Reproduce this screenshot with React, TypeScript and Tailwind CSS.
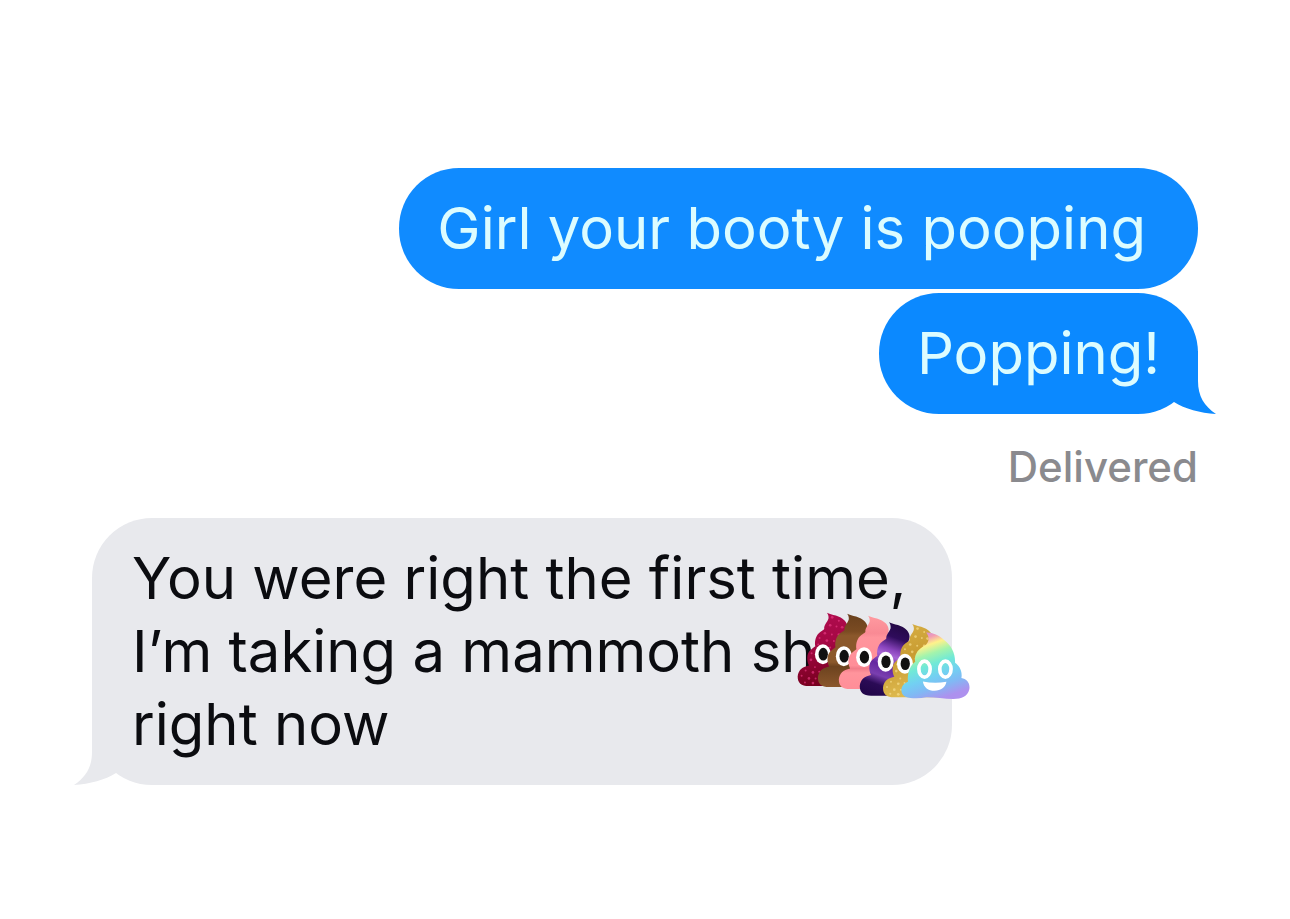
import { ReactNode } from "react";
import clsx from "clsx";

const PILE =
  "M88 0 C102 7 128 8 142 24 C152 36 152 48 146 58 C162 68 170 86 162 104 C178 112 186 130 180 152 C200 156 212 172 207 194 C202 214 185 220 165 221 L34 221 C10 221 0 211 0 192 C2 174 12 164 34 159 C27 146 26 124 38 113 C42 109 48 105 53 101 C50 84 56 66 68 58 C73 55 76 53 80 49 C78 35 94 26 93 14 C93 8 91 4 88 0Z";

const piles = [
  { x: 4, y: 2, fill: "url(#ruby)", eyeX: 76, eyeY: 125, glitter: "#f0408a" },
  { x: 65, y: 5, fill: "url(#brown)", eyeX: 78, eyeY: 128 },
  { x: 128, y: 11, fill: "url(#pink)", eyeX: 76, eyeY: 125 },
  { x: 191, y: 31, fill: "url(#galaxy)", eyeX: 78, eyeY: 119 },
  { x: 261, y: 36, fill: "url(#gold)", eyeX: 66, eyeY: 120, glitter: "#fbe596" },
];

// [x, y, radius] inside a pile
const flecks = [
  [104, 14, 4], [124, 24, 3], [98, 38, 4], [117, 42, 3], [134, 44, 4],
  [82, 62, 4], [103, 66, 3], [124, 66, 4], [66, 76, 3], [88, 84, 4],
  [109, 85, 3], [62, 96, 3], [76, 103, 4], [98, 105, 3], [42, 122, 3],
  [40, 142, 4], [52, 164, 3], [24, 174, 3], [46, 180, 4], [12, 190, 3],
  [34, 198, 4], [54, 198, 3], [22, 210, 3], [46, 212, 4], [65, 178, 3],
];

const EmojiPile = () => (
  <svg
    viewBox="0 0 522 262"
    role="img"
    aria-label="Colourful poop emojis"
    className="absolute -left-5 -top-1 h-[87px] w-[174px]"
  >
    <defs>
      <linearGradient id="ruby" x1="0" y1="0" x2="0.2" y2="1">
        <stop offset="0" stopColor="#b10d50" />
        <stop offset="0.45" stopColor="#a60845" />
        <stop offset="1" stopColor="#77001f" />
      </linearGradient>
      <linearGradient id="brown" x1="0" y1="0" x2="0" y2="1">
        <stop offset="0" stopColor="#69401d" />
        <stop offset="0.24" stopColor="#7a4b22" />
        <stop offset="0.3" stopColor="#8b582b" />
        <stop offset="0.66" stopColor="#8b582b" />
        <stop offset="0.72" stopColor="#6d431f" />
        <stop offset="1" stopColor="#8a572c" />
      </linearGradient>
      <linearGradient id="pink" x1="0" y1="0" x2="0" y2="1">
        <stop offset="0" stopColor="#ff9aa0" />
        <stop offset="0.24" stopColor="#f98a94" />
        <stop offset="0.3" stopColor="#ff949c" />
        <stop offset="0.68" stopColor="#ff8e98" />
        <stop offset="0.72" stopColor="#f27e8a" />
        <stop offset="0.78" stopColor="#ff949c" />
        <stop offset="1" stopColor="#ff8e98" />
      </linearGradient>
      <linearGradient id="galaxy" gradientUnits="userSpaceOnUse" x1="130" y1="0" x2="50" y2="221">
        <stop offset="0" stopColor="#20073f" />
        <stop offset="0.22" stopColor="#2f0c5c" />
        <stop offset="0.38" stopColor="#8a44bd" />
        <stop offset="0.46" stopColor="#a765d4" />
        <stop offset="0.6" stopColor="#6427a0" />
        <stop offset="0.74" stopColor="#7a3fb0" />
        <stop offset="0.86" stopColor="#2b0b56" />
        <stop offset="1" stopColor="#22064a" />
      </linearGradient>
      <linearGradient id="gold" x1="0" y1="0" x2="0.3" y2="1">
        <stop offset="0" stopColor="#d9b247" />
        <stop offset="0.5" stopColor="#c99c32" />
        <stop offset="1" stopColor="#dfbb50" />
      </linearGradient>
      <linearGradient id="rainbow" gradientUnits="userSpaceOnUse" x1="370" y1="60" x2="440" y2="260">
        <stop offset="0" stopColor="#c98fe0" />
        <stop offset="0.1" stopColor="#f29cb4" />
        <stop offset="0.2" stopColor="#fff28b" />
        <stop offset="0.33" stopColor="#a4f4ac" />
        <stop offset="0.48" stopColor="#70e9d7" />
        <stop offset="0.65" stopColor="#72d0f2" />
        <stop offset="0.8" stopColor="#80b9f4" />
        <stop offset="0.98" stopColor="#ad91ee" />
      </linearGradient>
    </defs>

    {piles.map((pile) => (
      <g key={pile.x} transform={`translate(${pile.x} ${pile.y})`}>
        <path d={PILE} fill={pile.fill} />
        {pile.glitter &&
          flecks.map(([x, y, r]) => (
            <circle key={`${x}-${y}`} cx={x} cy={y} r={r} fill={pile.glitter} opacity="0.6" />
          ))}
        <ellipse cx={pile.eyeX} cy={pile.eyeY} rx="24" ry="30" fill="#fff" />
        <ellipse cx={pile.eyeX + 1} cy={pile.eyeY} rx="14" ry="19" fill="#111" />
      </g>
    ))}

    <g transform="translate(5 2)">
      <path
        d="M386 60 C404 59 424 68 440 82 C461 98 474 120 473 151 C486 160 496 177 492 197 C509 200 519 213 516 231 C511 253 493 260 468 260 C440 260 415 255 387 255 C364 259 340 259 323 253 C306 244 307 217 331 208 C329 184 336 161 353 148 C349 127 361 110 382 99 C395 90 397 73 386 60Z"
        fill="url(#rainbow)"
      />
      <ellipse cx="381" cy="170" rx="17" ry="24" fill="none" stroke="#fff" strokeWidth="11" />
      <ellipse cx="444" cy="170" rx="17" ry="24" fill="none" stroke="#fff" strokeWidth="11" />
      <path d="M376 207 Q411 215 447 208 C444 225 431 235 411 235 C392 235 379 225 376 207Z" fill="#fff" />
    </g>
  </svg>
);

const Tail = ({ side }: { side: "left" | "right" }) => (
  <svg
    viewBox="0 0 47 63"
    aria-hidden="true"
    fill="currentColor"
    className={clsx(
      "absolute bottom-0 h-[63px] w-[47px]",
      side === "right" ? "-right-[18px] text-[#0b89ff]" : "-left-[18px] -scale-x-100 text-[#e8e9ed]"
    )}
  >
    <path d="M29 0 V30 C29 45 35 55 47 63 C31 62 16 58 5 51 L0 40 V0Z" />
  </svg>
);

type BubbleProps = {
  children: ReactNode;
  className: string;
  tail?: "left" | "right";
};

const Bubble = ({ children, className, tail }: BubbleProps) => (
  <div className={clsx("relative rounded-[60px] py-6 text-[58px] leading-[73px]", className)}>
    {tail && <Tail side={tail} />}
    <p className="relative whitespace-nowrap">{children}</p>
  </div>
);

const App = () => {
  return (
    <main className="flex flex-col bg-white px-[92px] pt-[168px] font-['Inter',sans-serif]">
      <section className="flex flex-col items-end gap-1">
        <Bubble className="bg-[#108bff] pl-[38px] pr-[52px] text-[#dcfcff]">Girl your booty is pooping</Bubble>
        <Bubble className="bg-[#0b89ff] pl-[38px] pr-[38px] text-[#dcfcff]" tail="right">
          Popping!
        </Bubble>
        <span className="mt-6 text-[42px] font-medium leading-[50px] text-[#8a8a8e]">Delivered</span>
      </section>

      <section className="mt-[26px] flex flex-col items-start">
        <Bubble className="bg-[#e8e9ed] pl-10 pr-[46px] text-[#0b0c10]" tail="left">
          You were right the first time,
          <br />
          I’m taking a mammoth sh
          <span className="relative inline-block h-0 w-0 align-text-top">
            <EmojiPile />
          </span>
          <br />
          right now
        </Bubble>
      </section>
    </main>
  );
};

export default App;
